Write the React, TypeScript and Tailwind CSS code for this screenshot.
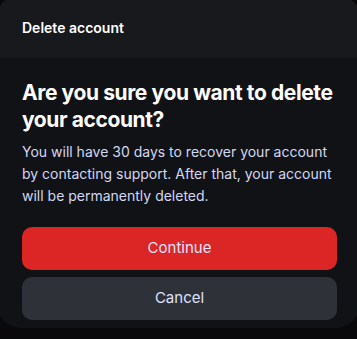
export default function App() {
  return (
    <div
      className="h-[339px] w-[357px] overflow-hidden bg-[#09090b] text-white"
      style={{ fontFamily: 'Inter, "Noto Sans", sans-serif' }}
    >
      <div className="-mx-[4px] -mt-[6px] h-[334px] overflow-hidden rounded-[26px] bg-[#111216]">
        <div className="flex h-[64px] items-end bg-[#18191c] px-[26px] pb-[20px]">
          <h3 className="text-[14px] font-semibold leading-[20px]">Delete account</h3>
        </div>
        <div className="pl-[26px] pr-[24px] pt-[21px]">
          <h2 className="text-[21px] font-bold leading-[27px] tracking-[-0.4px]">
            Are you sure you want to delete your account?
          </h2>
          <p className="mt-[8px] text-[14px] leading-[22px] text-[#d3d8f2]">
            You will have 30 days to recover your account by contacting support. After that, your account
            will be permanently deleted.
          </p>
          <div className="mt-[20px] flex flex-col gap-[7px]">
            <button className="h-[43px] w-full rounded-[10px] bg-[#dc2626] text-[15px] text-[#e2e3ff]">
              Continue
            </button>
            <button className="h-[43px] w-full rounded-[10px] bg-[#2f3139] text-[15px] text-[#dde2ff]">
              Cancel
            </button>
          </div>
        </div>
      </div>
    </div>
  );
}
